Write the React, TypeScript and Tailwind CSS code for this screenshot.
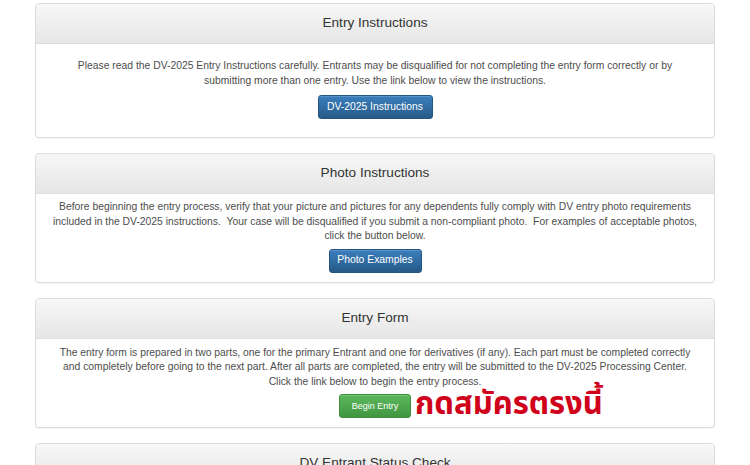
import React from "react";

type PanelProps = {
	title: string;
	bodyClass: string;
	children: React.ReactNode;
};

function Panel({ title, bodyClass, children }: PanelProps) {
	return (
		<div className="shrink-0 w-[680px] mx-auto border border-[#dcdcdc] rounded-[4px] bg-white shadow-[0_1px_1px_rgba(0,0,0,0.05)]">
			<div className="h-[40px] flex items-center justify-center rounded-t-[3px] bg-[linear-gradient(to_bottom,#f7f7f7,#e6e6e6)] border-b border-[#dedede]">
				<h3 className="text-[13.6px] text-[#333] font-normal">{title}</h3>
			</div>
			<div className={"text-center text-[10.35px] leading-[14.5px] text-[#4d4d4d] px-[10px] " + bodyClass}>
				{children}
			</div>
		</div>
	);
}

function BlueButton({ width, label }: { width: string; label: string }) {
	return (
		<button className={width + " h-[24px] rounded-[3px] text-white text-[10.35px] border border-[#245580] bg-[linear-gradient(to_bottom,#3b7fbd,#265a88)] shadow-[inset_0_1px_0_rgba(255,255,255,0.15)]"}>
			{label}
		</button>
	);
}

export default function App() {
	return (
		<div className="w-[750px] h-[465px] overflow-hidden bg-white pt-[3px] flex flex-col gap-[15px] font-['Liberation_Sans',Arial,sans-serif]">
			<Panel title="Entry Instructions" bodyClass="pt-[15px] pb-[18px]">
				<p>
					Please read the DV-2025 Entry Instructions carefully. Entrants may be disqualified for not completing the entry form correctly or by
					<br />
					submitting more than one entry. Use the link below to view the instructions.
				</p>
				<div className="mt-[7px]">
					<BlueButton width="w-[115px]" label="DV-2025 Instructions" />
				</div>
			</Panel>

			<Panel title="Photo Instructions" bodyClass="pt-[6px] pb-[9px]">
				<p>
					Before beginning the entry process, verify that your picture and pictures for any dependents fully comply with DV entry photo requirements
					<br />
					included in the DV-2025 instructions.&nbsp; Your case will be disqualified if you submit a non-compliant photo.&nbsp; For examples of acceptable photos,
					<br />
					click the button below.
				</p>
				<div className="mt-[5px]">
					<BlueButton width="w-[93px]" label="Photo Examples" />
				</div>
			</Panel>

			<Panel title="Entry Form" bodyClass="pt-[7px] pb-[9px]">
				<p>
					The entry form is prepared in two parts, one for the primary Entrant and one for derivatives (if any). Each part must be completed correctly
					<br />
					and completely before going to the next part. After all parts are completed, the entry will be submitted to the DV-2025 Processing Center.
					<br />
					Click the link below to begin the entry process.
				</p>
				<div className="mt-[5px] flex justify-center">
					<div className="relative">
						<button className="w-[72px] h-[24px] rounded-[3px] text-white text-[9px] border border-[#3e8f3e] bg-[linear-gradient(to_bottom,#5cb85c,#419641)] shadow-[inset_0_1px_0_rgba(255,255,255,0.15)]">
							Begin Entry
						</button>
						{/* red Thai call-out next to the green button */}
						<span className="absolute left-[76px] top-[-3px] whitespace-nowrap text-[31px] leading-[28px] font-bold text-[#d0021b] font-['Noto_Sans_Thai','Noto_Sans',sans-serif]">
							กดสมัครตรงนี้
						</span>
					</div>
				</div>
			</Panel>

			<Panel title="DV Entrant Status Check" bodyClass="pt-[10px] pb-[10px]">
				<p>Check the status of your entry.</p>
			</Panel>
		</div>
	);
}
